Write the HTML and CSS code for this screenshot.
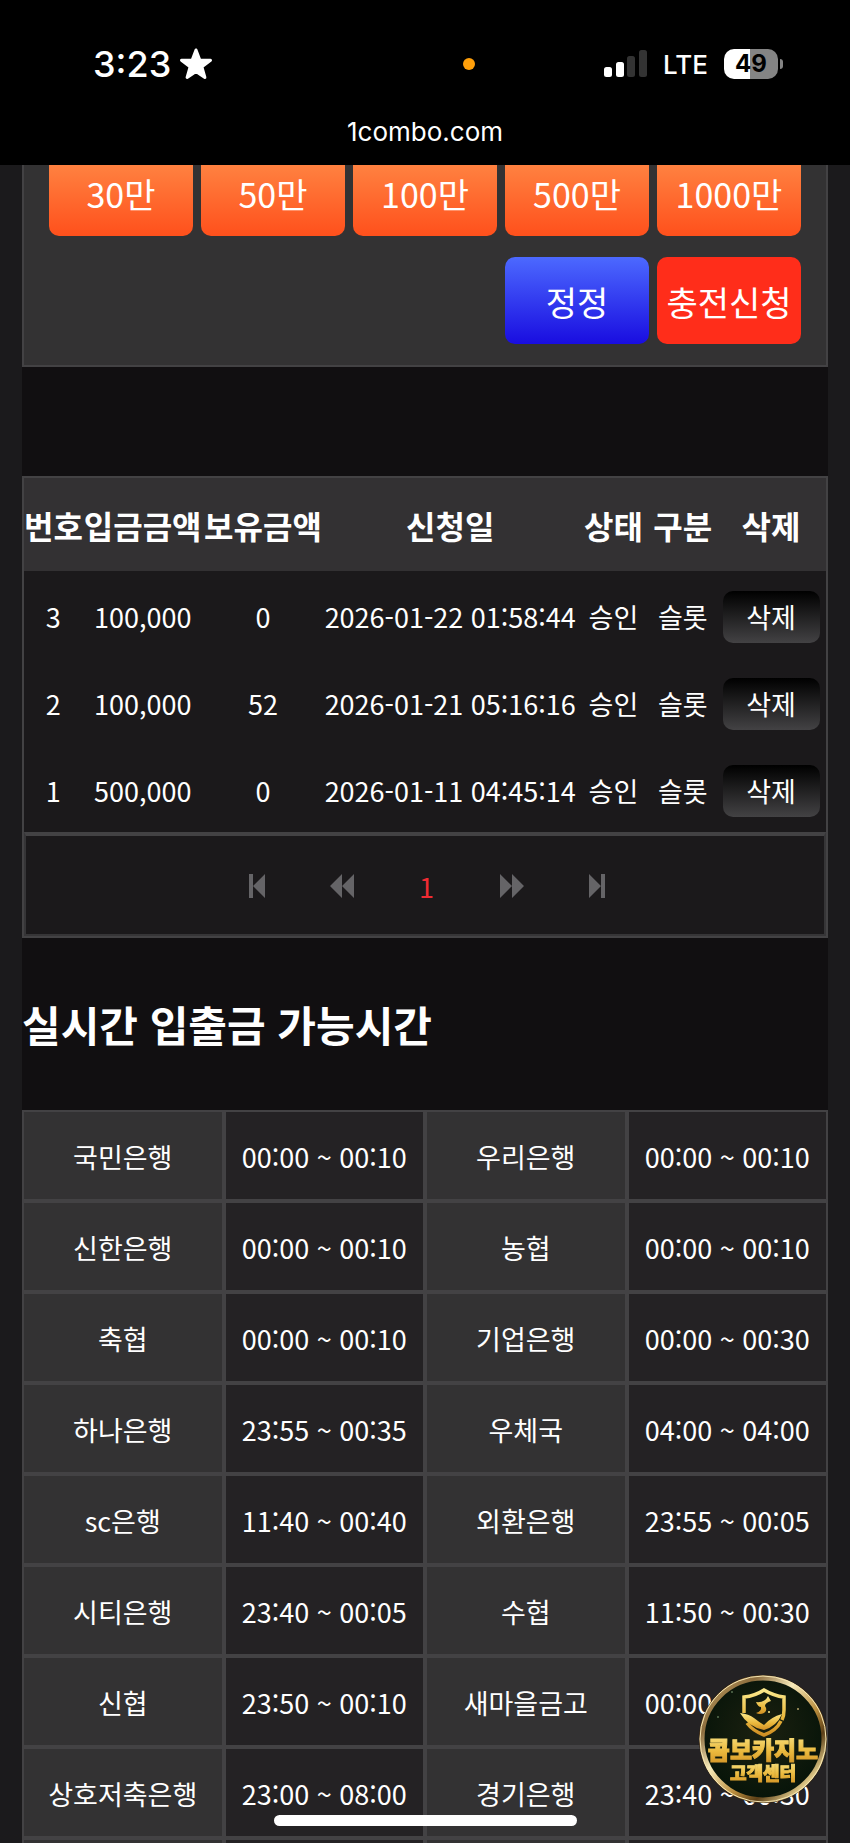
FILE: index.html
```html
<!DOCTYPE html>
<html lang="ko">
<head>
<meta charset="utf-8">
<meta name="viewport" content="width=device-width, initial-scale=1">
<title>1combo.com</title>
<link rel="stylesheet" href="styles.css">
</head>
<body>
<header class="top">
  <div class="status">
    <div class="status-left">
      <span class="clock">3:23</span>
      <svg class="star" viewBox="0 0 34 32" aria-hidden="true"><path d="M17 2l3.700 9.900 10.800.3-8.600 6.600 3 10.700L17 23.400 8.100 29.500l3-10.700-8.600-6.600 10.800-.3z" fill="#fff" stroke="#fff" stroke-width="3" stroke-linejoin="round"/></svg>
    </div>
    <span class="dot"></span>
    <div class="status-right">
      <svg class="signal" viewBox="0 0 43 28" aria-hidden="true"><rect x="0" y="17" width="8" height="10" rx="2.500" fill="#fff"/><rect x="12" y="12" width="8" height="15" rx="2.500" fill="#fff"/><rect x="23" y="6" width="8" height="21" rx="2.500" fill="#333"/><rect x="35" y="0" width="8" height="27" rx="2.500" fill="#333"/></svg>
      <span class="net">LTE</span>
      <span class="battery">49</span>
    </div>
  </div>
  <div class="address">1combo.com</div>
</header>
<main class="page">
  <section class="panel">
    <div class="amounts">
      <button type="button" class="btn amount">30만</button>
      <button type="button" class="btn amount">50만</button>
      <button type="button" class="btn amount">100만</button>
      <button type="button" class="btn amount">500만</button>
      <button type="button" class="btn amount">1000만</button>
      <button type="button" class="btn reset">정정</button>
      <button type="button" class="btn apply">충전신청</button>
    </div>
  </section>
  <section class="history">
    <table class="list">
      <colgroup><col class="c-no"><col class="c-sum"><col class="c-sum"><col class="c-date"><col class="c-state"><col class="c-kind"><col class="c-del"></colgroup>
      <thead><tr><th>번호</th><th>입금금액</th><th>보유금액</th><th>신청일</th><th>상태</th><th>구분</th><th>삭제</th></tr></thead>
      <tbody>
        <tr><td>3</td><td>100,000</td><td>0</td><td>2026-01-22 01:58:44</td><td>승인</td><td>슬롯</td><td><button type="button" class="del">삭제</button></td></tr>
        <tr><td>2</td><td>100,000</td><td>52</td><td>2026-01-21 05:16:16</td><td>승인</td><td>슬롯</td><td><button type="button" class="del">삭제</button></td></tr>
        <tr><td>1</td><td>500,000</td><td>0</td><td>2026-01-11 04:45:14</td><td>승인</td><td>슬롯</td><td><button type="button" class="del">삭제</button></td></tr>
      </tbody>
    </table>
    <nav class="pager">
      <a href="#" aria-label="처음"><svg viewBox="0 0 26 26"><path d="M5 1h4v24H5zM21 1v24L9 13z"/></svg></a>
      <a href="#" aria-label="이전"><svg viewBox="0 0 26 26"><path d="M13 1v24L1 13zM25 1v24L13 13z"/></svg></a>
      <a href="#" class="current">1</a>
      <a href="#" aria-label="다음"><svg viewBox="0 0 26 26"><path d="M1 1v24l12-12zM13 1v24l12-12z"/></svg></a>
      <a href="#" aria-label="마지막"><svg viewBox="0 0 26 26"><path d="M17 1h4v24h-4zM5 1v24l12-12z"/></svg></a>
    </nav>
  </section>
  <h2 class="title">실시간 입출금 가능시간</h2>
  <table class="banks">
    <tbody>
      <tr><th>국민은행</th><td>00:00 ~ 00:10</td><th>우리은행</th><td>00:00 ~ 00:10</td></tr>
      <tr><th>신한은행</th><td>00:00 ~ 00:10</td><th>농협</th><td>00:00 ~ 00:10</td></tr>
      <tr><th>축협</th><td>00:00 ~ 00:10</td><th>기업은행</th><td>00:00 ~ 00:30</td></tr>
      <tr><th>하나은행</th><td>23:55 ~ 00:35</td><th>우체국</th><td>04:00 ~ 04:00</td></tr>
      <tr><th>sc은행</th><td>11:40 ~ 00:40</td><th>외환은행</th><td>23:55 ~ 00:05</td></tr>
      <tr><th>시티은행</th><td>23:40 ~ 00:05</td><th>수협</th><td>11:50 ~ 00:30</td></tr>
      <tr><th>신협</th><td>23:50 ~ 00:10</td><th>새마을금고</th><td>00:00 ~ 00:30</td></tr>
      <tr><th>상호저축은행</th><td>23:00 ~ 08:00</td><th>경기은행</th><td>23:40 ~ 00:30</td></tr>
      <tr><th></th><td></td><th></th><td></td></tr>
    </tbody>
  </table>
</main>
<a href="#" class="support">
  <svg viewBox="0 0 130 130" role="img" aria-label="콤보카지노 고객센터">
    <defs>
      <linearGradient id="rim" x1="0" y1="0" x2="1" y2="1"><stop offset="0" stop-color="#c9a866"/><stop offset=".22" stop-color="#8b6c3d"/><stop offset=".4" stop-color="#f7eaba"/><stop offset=".6" stop-color="#b98c3c"/><stop offset=".72" stop-color="#5c3f17"/><stop offset=".88" stop-color="#f1dc98"/><stop offset="1" stop-color="#d9b45c"/></linearGradient>
      <radialGradient id="face" cx=".5" cy=".45" r=".55"><stop offset="0" stop-color="#1c2110"/><stop offset="1" stop-color="#071409"/></radialGradient>
      <linearGradient id="gold" x1="0" y1="0" x2="0" y2="1"><stop offset="0" stop-color="#fbe98c"/><stop offset=".6" stop-color="#eab83c"/><stop offset="1" stop-color="#d08f24"/></linearGradient>
    </defs>
    <circle cx="65" cy="65" r="64" fill="#32210c"/>
    <circle cx="65" cy="65" r="61" fill="url(#face)" stroke="url(#rim)" stroke-width="5"/>
    <circle cx="65" cy="65" r="63" fill="none" stroke="#f6e7b4" stroke-width="1"/>
    <path d="M46 39V23q11-1 20-7 10 6 20 7v13q0 6-2 10M49 49q6 8 17 12 12-4 17-14" fill="none" stroke="url(#gold)" stroke-width="3.500"/>
    <path d="M42 39q9 1 14 5 5 4 10 7 7-8 18-11-5 12-18 16-16-3-24-17z" fill="url(#gold)"/>
    <path d="M58 28q9 1 12-6l3 5q-6 2-6 5 3 4-1 7-4 2-8 0 6-2 5-6-3 0-5-5z" fill="url(#gold)"/>
    <circle cx="71" cy="38" r="1" fill="#fbe98c"/>
    <circle cx="34" cy="18" r="1" fill="#587052"/><circle cx="100" cy="35" r="1" fill="#b6a369"/><circle cx="20" cy="43" r="1" fill="#587052"/>
    <text class="badge-name" x="65" y="85" text-anchor="middle">콤보카지노</text>
    <text class="badge-sub" x="65" y="106" text-anchor="middle">고객센터</text>
  </svg>
</a>
<div class="home-bar"></div>
</body>
</html>
```

FILE: styles.css
```css
* { box-sizing: border-box; }

body {
  margin: 0;
  height: 100vh;
  overflow: hidden;
  background: #1b1a1c;
  color: #fff;
  font-family: "Noto Sans CJK KR", sans-serif;
  font-size: 27px;
}

button { border: 0; color: inherit; font-family: inherit; cursor: pointer; }
table { width: 100%; table-layout: fixed; border-spacing: 0; }
a { color: inherit; text-decoration: none; }

.top {
  position: relative;
  z-index: 2;
  height: 165px;
  padding-top: 40px;
  background: #000;
  font-family: Inter, sans-serif;
}
.status {
  display: grid;
  grid-template-columns: 11fr 12px 9fr;
  align-items: center;
  height: 48px;
  padding: 0 72px 0 93px;
}
.status-left { display: flex; align-items: center; gap: 8px; }
.clock { font-size: 36px; font-weight: 500; line-height: 48px; }
.star { width: 34px; height: 32px; }
.dot { width: 12px; height: 12px; border-radius: 50%; background: #ff9f0a; }
.status-right { display: flex; align-items: center; justify-content: flex-end; }
.signal { width: 43px; height: 28px; margin-right: 16px; }
.net { margin-right: 16px; font-size: 26px; font-weight: 500; }
.battery {
  position: relative;
  width: 54px;
  height: 30px;
  border-radius: 10px;
  background: linear-gradient(90deg, #fff 49%, #848484 49%);
  color: #000;
  font-size: 24px;
  font-weight: 700;
  line-height: 30px;
  text-align: center;
}
.battery::after {
  content: "";
  position: absolute;
  top: 10px;
  right: -5px;
  width: 3px;
  height: 10px;
  border-radius: 0 5px 5px 0;
  background: #848484;
}
.address { margin-top: 28px; font-size: 26px; line-height: 32px; text-align: center; }

.page { margin: -38px 22px 0; background: #110f11; }

.panel {
  padding: 20px 25px 21px;
  border: 2px solid #434244;
  background: #333233;
}
.amounts { display: grid; grid-template-columns: repeat(5, 1fr); gap: 21px 8px; }
.btn {
  height: 87px;
  padding: 2px 0 0;
  border-radius: 10px;
  font-size: 34px;
  line-height: 48px;
  white-space: nowrap;
}
.amount { background: linear-gradient(#ff8c48, #ff501c); }
.reset { grid-column: 4; background: linear-gradient(#4c69ff, #190de0); }
.apply { background: #ff2d1a; }

.history { margin-top: 109px; border: 2px solid #434244; background: #1b191b; }
.list { text-align: center; line-height: 40px; white-space: nowrap; }
.list th { height: 93px; padding: 0; background: #333133; font-size: 32px; font-weight: 700; }
.list td { height: 87px; padding: 4px 0 0; }
.c-no { width: 7.3%; }
.c-sum { width: 15%; }
.c-date { width: 31.7%; }
.c-state { width: 9%; }
.c-kind { width: 8.3%; }
.c-del { width: 13.7%; }
.del {
  display: block;
  width: 97px;
  height: 52px;
  margin: 0 auto;
  padding: 0;
  border-radius: 10px;
  background: linear-gradient(#000, #434244);
  font-size: 27px;
  line-height: 40px;
}
.pager {
  display: flex;
  align-items: center;
  justify-content: center;
  height: 104px;
  padding: 2px 0 0 3px;
  border: 2px solid #363537;
  border-top: 4px solid #434244;
}
.pager a { display: flex; align-items: center; justify-content: center; width: 85px; height: 60px; }
.pager svg { width: 26px; height: 26px; fill: #656467; }
.pager .current { color: #f02b33; }

.title { margin: 0; padding: 56px 0; font-size: 42px; font-weight: 700; line-height: 60px; }

.banks { text-align: center; line-height: 40px; white-space: nowrap; }
.banks th, .banks td { height: 91px; padding: 2px 0 0; border: 2px solid #434244; font-weight: 400; }
.banks th { background: #333233; }
.banks td { background: #242224; }

.support { position: fixed; right: 22px; bottom: 39px; width: 130px; height: 130px; }
.support svg { display: block; width: 100%; height: 100%; }
.badge-name, .badge-sub { fill: url(#gold); stroke: url(#gold); font-weight: 900; }
.badge-name { font-size: 24px; stroke-width: 1px; }
.badge-sub { font-size: 18px; }
.home-bar {
  position: fixed;
  left: 50%;
  bottom: 17px;
  width: 303px;
  height: 11px;
  margin-left: -151px;
  border-radius: 6px;
  background: #fff;
}
```
